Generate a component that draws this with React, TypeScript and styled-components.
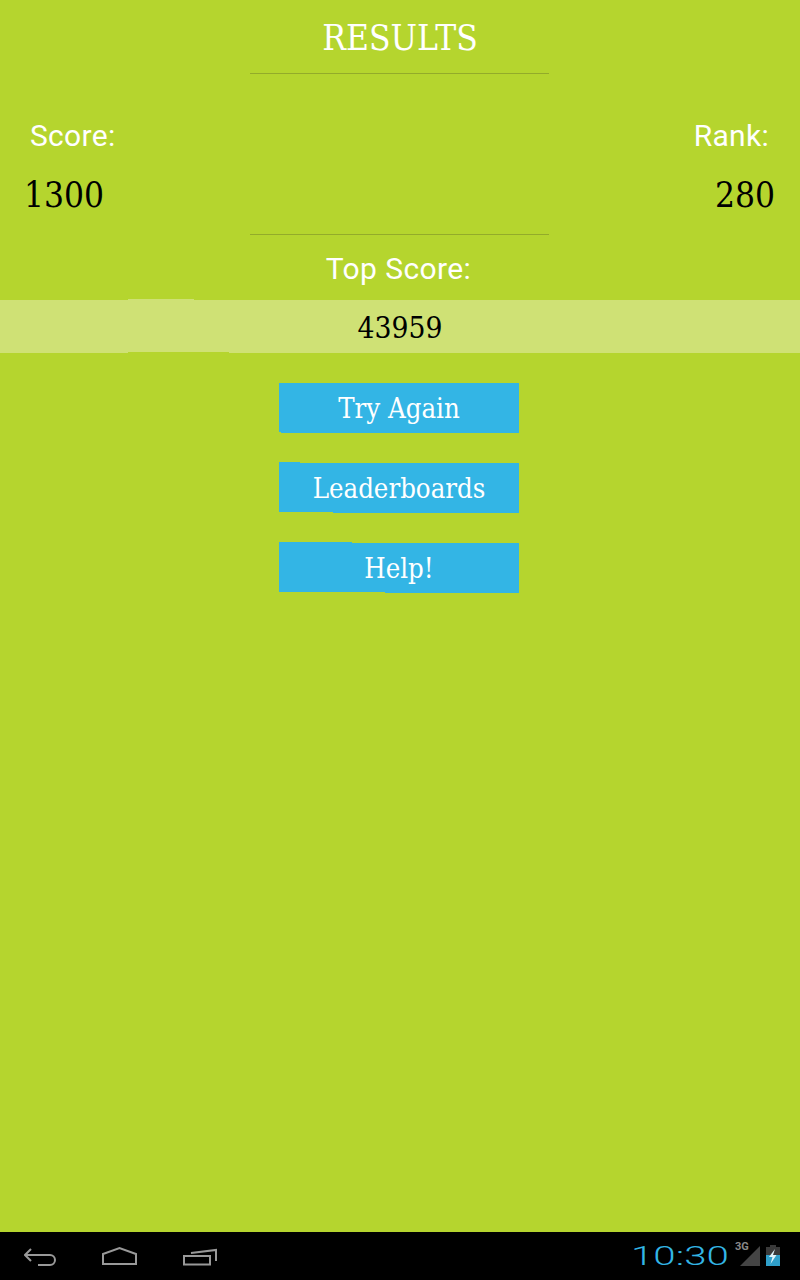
import { createGlobalStyle, styled } from "styled-components";

const GlobalStyle = createGlobalStyle`
  html, body {
    margin: 0;
    padding: 0;
    height: 100%;
  }
  body {
    background: #b5d52e;
    font-family: "Roboto", sans-serif;
  }
`;

const GREEN = "#b5d52e";
const BLUE = "#33b5e5";
const SERIF = `"DejaVu Serif Condensed", "DejaVu Serif", serif`;

const Root = styled.div`
  height: 100vh;
  display: flex;
  flex-direction: column;
  overflow: hidden;
`;
const Main = styled.main`
  flex: 1;
  display: flex;
  flex-direction: column;
  align-items: center;
`;
const Title = styled.h1`
  margin: 0;
  height: 73px;
  line-height: 76px;
  font-family: ${SERIF};
  font-stretch: condensed;
  font-weight: 400;
  font-size: 35px;
  color: #fff;
`;
const Rule = styled.div`
  width: 299px;
  height: 1px;
  margin-right: 1px;
  background: #93ab2a;
`;
const Scores = styled.section`
  align-self: stretch;
  height: 160px;
  padding: 41px 25px 0 24px;
  box-sizing: border-box;
  display: grid;
  grid-template-columns: 1fr 1fr;
  grid-template-rows: 42px 76px;
`;
const Label = styled.div<{ $right?: boolean }>`
  font-size: 30px;
  line-height: 42px;
  letter-spacing: 0.3px;
  color: #fff;
  text-align: ${(p) => (p.$right ? "right" : "left")};
  padding: ${(p) => (p.$right ? "0 6px 0 0" : "0 0 0 6px")};
`;
const Value = styled.div<{ $right?: boolean }>`
  font-family: ${SERIF};
  font-stretch: condensed;
  font-size: 35px;
  line-height: 76px;
  color: #000;
  text-align: ${(p) => (p.$right ? "right" : "left")};
`;
const TopLabel = styled.div`
  height: 65px;
  margin-right: 3px;
  line-height: 68px;
  font-size: 30px;
  letter-spacing: 0.4px;
  color: #fff;
`;
const Band = styled.div`
  align-self: stretch;
  height: 53px;
  position: relative;
  background: #cfe175;
  font-family: ${SERIF};
  font-stretch: condensed;
  font-size: 29.7px;
  line-height: 56px;
  text-align: center;
  color: #000;
  &::before {
    content: "";
    position: absolute;
    left: 128px;
    top: -1px;
    width: 66px;
    height: 1px;
    background: #cfe175;
  }
  &::after {
    content: "";
    position: absolute;
    left: 128px;
    bottom: 0;
    width: 101px;
    height: 1px;
    background: ${GREEN};
  }
`;
const Buttons = styled.div`
  margin: 30px 2px 0 0;
  display: flex;
  flex-direction: column;
  gap: 30px;
`;
const Button = styled.button<{ $tab: number; $cut: number }>`
  position: relative;
  display: block;
  width: 240px;
  height: 50px;
  padding: 2px 0 0;
  border: 0;
  background: ${BLUE};
  color: #fff;
  font-family: ${SERIF};
  font-stretch: condensed;
  font-size: 27.3px;
  line-height: 48px;
  &::before {
    content: "";
    position: absolute;
    left: 0;
    top: -1px;
    width: ${(p) => p.$tab}px;
    height: 1px;
    background: ${BLUE};
  }
  &::after {
    content: "";
    position: absolute;
    left: 0;
    bottom: 0;
    width: ${(p) => p.$cut}px;
    height: 1px;
    background: ${GREEN};
  }
`;
const NavBar = styled.footer`
  flex: 0 0 48px;
  display: flex;
  align-items: center;
  justify-content: space-between;
  background: #000;
  padding: 0 19px 0 24px;
`;
const NavIcons = styled.nav`
  display: flex;
  align-items: center;
  gap: 45px;
`;
const NavIcon = styled.svg`
  display: block;
  fill: none;
  stroke: #999;
  stroke-width: 2;
`;
const Status = styled.div`
  display: flex;
  align-items: center;
`;
const Clock = styled.span`
  display: inline-block;
  width: 104px;
  font-family: "Roboto", sans-serif;
  font-weight: 300;
  font-size: 25.5px;
  line-height: 48px;
  color: ${BLUE};
  transform: scaleX(1.58);
  transform-origin: left center;
`;
const SignalBox = styled.div`
  position: relative;
  width: 30px;
  height: 24px;
`;
const NetType = styled.span`
  position: absolute;
  left: 0;
  top: -3px;
  font-family: "Roboto", sans-serif;
  font-weight: 700;
  font-size: 11px;
  line-height: 12px;
  color: #888;
`;

export default function App() {
  return (
    <Root>
      <GlobalStyle />
      <Main>
        <Title>RESULTS</Title>
        <Rule />
        <Scores>
          <Label>Score:</Label>
          <Label $right>Rank:</Label>
          <Value>1300</Value>
          <Value $right>280</Value>
        </Scores>
        <Rule />
        <TopLabel>Top Score:</TopLabel>
        <Band>43959</Band>
        <Buttons>
          <Button $tab={0} $cut={2}>Try Again</Button>
          <Button $tab={21} $cut={54}>Leaderboards</Button>
          <Button $tab={73} $cut={106}>Help!</Button>
        </Buttons>
      </Main>
      <NavBar>
        <NavIcons>
          <NavIcon width="33" height="20" viewBox="0 0 33 20">
            <path d="M7 3 L1 9 L7 15 M1 9 H26 A5 5 0 0 1 26 19 H14" />
          </NavIcon>
          <NavIcon width="35" height="20" viewBox="0 0 35 20">
            <path d="M1 18 V8 L17.5 2 L34 8 V18 Z" />
          </NavIcon>
          <NavIcon width="36" height="20" viewBox="0 0 36 20">
            <rect x="2" y="10" width="26" height="8.5" />
            <path d="M9 7 L34 4 V15" />
          </NavIcon>
        </NavIcons>
        <Status>
          <Clock>10:30</Clock>
          <SignalBox>
            <NetType>3G</NetType>
            <svg width="30" height="24" viewBox="0 0 30 24">
              <path d="M5 22 L25 2 V22 Z" fill="#444" />
            </svg>
          </SignalBox>
          <svg width="16" height="24" viewBox="0 0 16 24">
            <path d="M5 1 H11 V3 H15 V11 H1 V3 H5 Z" fill="#3a3a3a" />
            <rect x="1" y="11" width="14" height="11" fill="#2f9fc9" />
            <path d="M10 5 L4 13 H7.5 L5.5 20 L11.5 11 H8 Z" fill="#dff4fb" />
          </svg>
        </Status>
      </NavBar>
    </Root>
  );
}
